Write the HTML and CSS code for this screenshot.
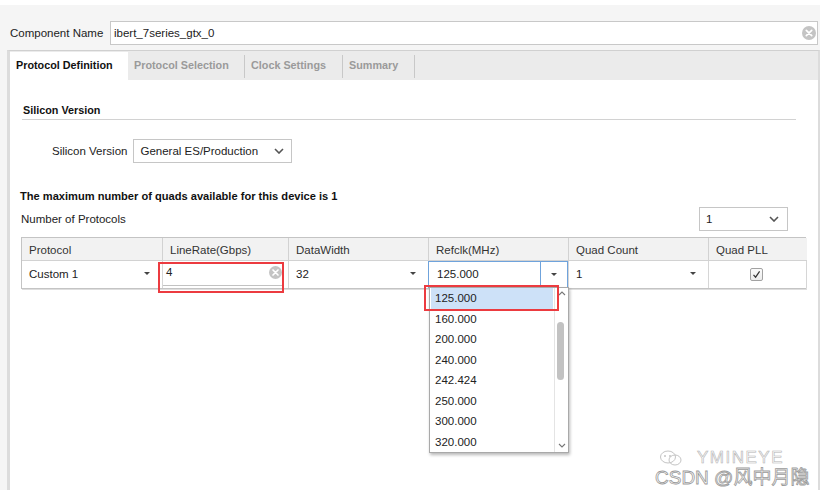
FILE: index.html
```html
<!DOCTYPE html>
<html>
<head>
<meta charset="utf-8">
<title>IBERT 7 Series GTX</title>
<link rel="stylesheet" href="styles.css">
</head>
<body>
<div class="app">
  <div class="name-row">
    <span class="name-label">Component Name</span>
    <div class="name-input">
      <span>ibert_7series_gtx_0</span>
      <svg class="clear-icon" width="14" height="14" viewBox="0 0 14 14"><circle cx="7" cy="7" r="7" fill="#c4c4c4"/><path d="M4.3 4.3 L9.7 9.7 M9.7 4.3 L4.3 9.7" stroke="#fff" stroke-width="1.7" stroke-linecap="round"/></svg>
    </div>
  </div>
  <div class="panel">
    <div class="tabs">
      <div class="tab tab-active">Protocol Definition</div>
      <div class="tab tab-2">Protocol Selection</div>
      <div class="tab-sep"></div>
      <div class="tab tab-3">Clock Settings</div>
      <div class="tab-sep"></div>
      <div class="tab tab-4">Summary</div>
      <div class="tab-sep"></div>
    </div>
    <div class="content">
      <div class="section-title">Silicon Version</div>
      <div class="silicon-row">
        <span class="label">Silicon Version</span>
        <div class="select select-silicon">
          <span>General ES/Production</span>
          <svg width="10" height="6" viewBox="0 0 10 6"><polyline points="1,1 5,5 9,1" fill="none" stroke="#555" stroke-width="1.6"/></svg>
        </div>
      </div>
      <div class="quads-info">The maximum number of quads available for this device is 1</div>
      <div class="protocols-row">
        <span class="label">Number of Protocols</span>
        <div class="select select-count">
          <span>1</span>
          <svg width="10" height="6" viewBox="0 0 10 6"><polyline points="1,1 5,5 9,1" fill="none" stroke="#555" stroke-width="1.6"/></svg>
        </div>
      </div>
      <div class="grid">
        <div class="th">Protocol</div>
        <div class="th">LineRate(Gbps)</div>
        <div class="th">DataWidth</div>
        <div class="th">Refclk(MHz)</div>
        <div class="th">Quad Count</div>
        <div class="th th-last">Quad PLL</div>

        <div class="td td-combo"><span>Custom 1</span><span class="tri"></span></div>
        <div class="td td-edit">
          <div class="editor">
            <span>4</span>
            <svg width="13" height="13" viewBox="0 0 14 14"><circle cx="7" cy="7" r="7" fill="#c4c4c4"/><path d="M4.3 4.3 L9.7 9.7 M9.7 4.3 L4.3 9.7" stroke="#fff" stroke-width="1.8" stroke-linecap="round"/></svg>
          </div>
          <div class="red-box red-edit"></div>
        </div>
        <div class="td td-combo"><span>32</span><span class="tri"></span></div>
        <div class="td td-refclk">
          <div class="refclk-editor">
            <span class="refclk-value">125.000</span>
            <span class="refclk-btn"><span class="tri"></span></span>
          </div>
          <div class="dropdown">
            <div class="list">
              <div class="item item-sel">125.000</div>
              <div class="item">160.000</div>
              <div class="item">200.000</div>
              <div class="item">240.000</div>
              <div class="item">242.424</div>
              <div class="item">250.000</div>
              <div class="item">300.000</div>
              <div class="item">320.000</div>
            </div>
            <div class="scrollbar">
              <svg width="8" height="5" viewBox="0 0 8 5"><polyline points="1,4 4,1 7,4" fill="none" stroke="#777" stroke-width="1.1"/></svg>
              <div class="track"><div class="thumb"></div></div>
              <svg width="8" height="5" viewBox="0 0 8 5"><polyline points="1,1 4,4 7,1" fill="none" stroke="#777" stroke-width="1.1"/></svg>
            </div>
            <div class="red-box red-item"></div>
          </div>
        </div>
        <div class="td td-combo"><span>1</span><span class="tri"></span></div>
        <div class="td td-check">
          <span class="checkbox"><svg width="11" height="11" viewBox="0 0 11 11"><polyline points="2.5,5.8 4.6,8.2 8.6,2.4" fill="none" stroke="#333" stroke-width="1.2"/></svg></span>
        </div>
      </div>
    </div>
  </div>
</div>
<div class="watermark">
  <div class="wm-top">
    <svg width="24" height="18" viewBox="0 0 24 18"><ellipse cx="9" cy="8" rx="7.5" ry="6" fill="none" stroke="#c4c4c4" stroke-width="1"/><ellipse cx="16" cy="11" rx="6" ry="5" fill="none" stroke="#c4c4c4" stroke-width="1"/><circle cx="6" cy="7" r="1" fill="#c4c4c4"/><circle cx="11" cy="7" r="1" fill="#c4c4c4"/></svg>
    <span>YMINEYE</span>
  </div>
  <div class="wm-text">CSDN @风中月隐</div>
</div>
</body>
</html>
```
FILE: styles.css
```css
* { box-sizing: border-box; }
html, body { margin: 0; padding: 0; }
body {
  width: 823px;
  height: 497px;
  background: #ffffff;
  font-family: "Liberation Sans", Arial, sans-serif;
  font-size: 11.5px;
  color: #222;
  overflow: hidden;
  position: relative;
}
.app {
  margin-top: 5px;
  width: 820px;
  height: 485px;
  background: #f5f5f5;
  display: flex;
  flex-direction: column;
}
.name-row {
  display: flex;
  align-items: center;
  height: 24px;
  margin: 16px 2px 5px 10px;
}
.name-label { width: 100px; color: #222; }
.name-input {
  flex: 1;
  height: 24px;
  background: #fff;
  border: 1px solid #c8c8c8;
  display: flex;
  align-items: center;
  justify-content: space-between;
  padding: 0 1px 0 3px;
}
.panel {
  flex: 1;
  margin-left: 7px;
  border-left: 3px solid #dcdcdc;
  border-right: 2px solid #dcdcdc;
  border-top: 1px solid #d0d0d0;
  display: flex;
  flex-direction: column;
  background: #fff;
}
.tabs {
  height: 29px;
  background: #ebebeb;
  display: flex;
  align-items: flex-end;
}
.tab {
  height: 28px;
  display: flex;
  align-items: center;
  padding-left: 6px;
  padding-bottom: 2px;
  font-weight: bold;
  font-size: 10.8px;
  color: #9a9a9a;
}
.tab-active { width: 118px; background: #fff; color: #111; }
.tab-2 { width: 116px; }
.tab-3 { width: 97px; }
.tab-4 { width: 71px; }
.tab-sep {
  width: 1px;
  height: 23px;
  align-self: center;
  margin-top: 1px;
  background: #c8c8c8;
}
.content {
  flex: 1;
  background: #fff;
}
.section-title {
  margin: 23px 0 0 12px;
  width: 774px;
  padding: 0 0 2px 1px;
  border-bottom: 1px solid #d2d2d2;
  font-weight: bold;
  font-size: 10.8px;
  line-height: 14px;
  color: #111;
}
.silicon-row {
  display: flex;
  align-items: center;
  margin: 19px 0 0 42px;
  gap: 6px;
}
.label { color: #222; }
.select {
  height: 24px;
  border: 1px solid #c6c6c6;
  background: #fff;
  display: flex;
  align-items: center;
  justify-content: space-between;
}
.select-silicon { width: 159px; padding: 0 7px 0 6px; }
.select-count { width: 89px; padding: 0 8px 0 6px; }
.quads-info {
  margin: 26px 0 0 10px;
  font-weight: bold;
  font-size: 11.1px;
  line-height: 14px;
  color: #111;
}
.protocols-row {
  display: flex;
  align-items: center;
  justify-content: space-between;
  margin: 4px 0 0 11px;
  width: 767px;
}
.grid {
  margin: 6px 0 0 11px;
  display: grid;
  grid-template-columns: 141px 126px 140px 140px 140px 98px;
  grid-template-rows: 23px 27px;
  width: 785px;
  border: 1px solid #c4c4c4;
  box-shadow: 1px 1px 0 #dedede;
}
.th {
  background: #f2f2f2;
  border-right: 1px solid #d2d2d2;
  border-bottom: 1px solid #d2d2d2;
  padding-left: 7px;
  padding-top: 1px;
  display: flex;
  align-items: center;
  color: #333;
}
.th-last, .td-check { border-right: none; }
.td {
  position: relative;
  background: #fff;
  border-right: 1px solid #d6d6d6;
  display: flex;
  align-items: center;
  color: #222;
}
.td-combo {
  justify-content: space-between;
  padding: 0 12px 2px 7px;
}
.tri {
  width: 0;
  height: 0;
  border-left: 3px solid transparent;
  border-right: 3px solid transparent;
  border-top: 3px solid #444;
}
.td-edit { padding: 0 6px 0 0; }
.editor {
  flex: 1;
  height: 25px;
  align-self: flex-start;
  border-bottom: 1px solid #c2c2c2;
  display: flex;
  align-items: center;
  justify-content: space-between;
  padding: 0 0 2px 3px;
}
.red-box {
  position: absolute;
  border: 2px solid #ec3b40;
  pointer-events: none;
}
.red-edit { left: -5px; top: 1px; width: 126px; height: 31px; }
.td-refclk { padding: 0; }
.refclk-editor {
  flex: 1;
  align-self: stretch;
  border: 1px solid #6fa3dc;
  display: flex;
  align-items: center;
  margin-left: -1px;
}
.refclk-value { flex: 1; padding-left: 8px; padding-bottom: 2px; }
.refclk-btn {
  width: 27px;
  align-self: stretch;
  border-left: 1px solid #6fa3dc;
  display: flex;
  align-items: center;
  justify-content: center;
}
.dropdown {
  position: absolute;
  left: 0;
  top: 26px;
  width: 140px;
  height: 166px;
  border: 1px solid #a9a9a9;
  background: #fff;
  box-shadow: 1px 2px 3px rgba(0,0,0,0.28);
  display: flex;
  z-index: 5;
}
.list { flex: 1; padding: 0 1px; }
.item {
  height: 20.5px;
  line-height: 20.5px;
  padding-left: 4px;
  color: #222;
}
.item-sel { background: #cde1f8; }
.scrollbar {
  width: 14px;
  border-left: 1px solid #e4e4e4;
  display: flex;
  flex-direction: column;
  align-items: center;
  padding: 3px 0 4px;
}
.track { flex: 1; width: 100%; padding: 26px 0 0 2px; }
.thumb { width: 7px; height: 58px; background: #c2c2c2; border-radius: 4px; }
.red-item { left: -6px; top: -3px; width: 135px; height: 26px; }
.td-check { justify-content: center; padding-left: 0; padding-right: 3px; padding-bottom: 1px; }
.checkbox {
  width: 13px;
  height: 13px;
  border: 1px solid #a2a2a2;
  border-radius: 2px;
  background: linear-gradient(#fbfbfb, #ececec);
  display: flex;
  align-items: center;
  justify-content: center;
}
.watermark {
  position: absolute;
  left: 655px;
  top: 449px;
  display: flex;
  flex-direction: column;
  pointer-events: none;
}
.wm-top {
  display: flex;
  align-items: center;
  gap: 14px;
  margin-left: 4px;
  height: 18px;
  font-size: 17px;
  color: #fff;
  -webkit-text-stroke: 0.6px #b4b4b4;
  letter-spacing: 1.5px;
}
.wm-text {
  font-family: "Liberation Sans", "Noto Sans CJK SC", sans-serif;
  font-size: 19px;
  line-height: 21px;
  color: #fff;
  -webkit-text-stroke: 0.8px #9a9a9a;
}
```
